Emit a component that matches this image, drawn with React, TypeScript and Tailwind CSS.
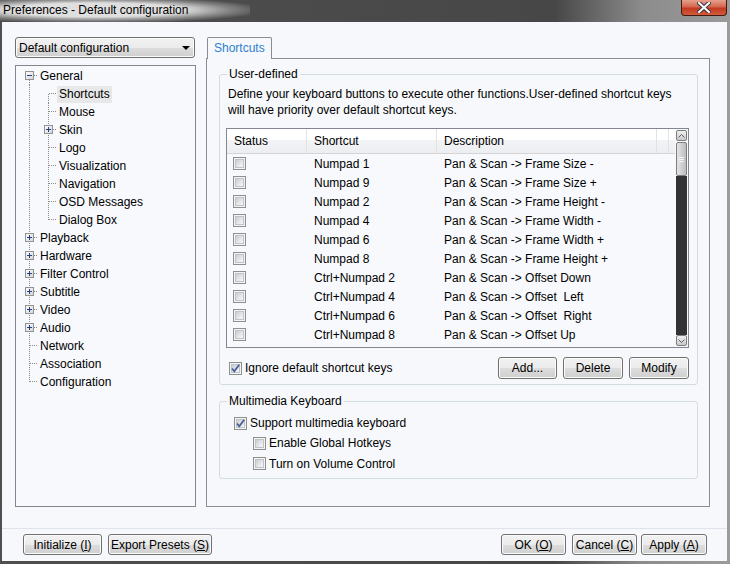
import type { ReactNode } from 'react';

const FONT = "font-['Liberation_Sans',Arial,sans-serif]";

type TreeItem = {
  label: string;
  level: 0 | 1;
  expander?: '+' | '-';
  first?: boolean;
  last?: boolean;
  selected?: boolean;
};

const tree: TreeItem[] = [
  { label: 'General', level: 0, expander: '-', first: true },
  { label: 'Shortcuts', level: 1, first: true, selected: true },
  { label: 'Mouse', level: 1 },
  { label: 'Skin', level: 1, expander: '+' },
  { label: 'Logo', level: 1 },
  { label: 'Visualization', level: 1 },
  { label: 'Navigation', level: 1 },
  { label: 'OSD Messages', level: 1 },
  { label: 'Dialog Box', level: 1, last: true },
  { label: 'Playback', level: 0, expander: '+' },
  { label: 'Hardware', level: 0, expander: '+' },
  { label: 'Filter Control', level: 0, expander: '+' },
  { label: 'Subtitle', level: 0, expander: '+' },
  { label: 'Video', level: 0, expander: '+' },
  { label: 'Audio', level: 0, expander: '+' },
  { label: 'Network', level: 0 },
  { label: 'Association', level: 0 },
  { label: 'Configuration', level: 0, last: true },
];

const shortcuts: [string, string][] = [
  ['Numpad 1', 'Pan & Scan -> Frame Size -'],
  ['Numpad 9', 'Pan & Scan -> Frame Size +'],
  ['Numpad 2', 'Pan & Scan -> Frame Height -'],
  ['Numpad 4', 'Pan & Scan -> Frame Width -'],
  ['Numpad 6', 'Pan & Scan -> Frame Width +'],
  ['Numpad 8', 'Pan & Scan -> Frame Height +'],
  ['Ctrl+Numpad 2', 'Pan & Scan -> Offset Down'],
  ['Ctrl+Numpad 4', 'Pan & Scan -> Offset  Left'],
  ['Ctrl+Numpad 6', 'Pan & Scan -> Offset  Right'],
  ['Ctrl+Numpad 8', 'Pan & Scan -> Offset Up'],
];

// one 16x18 connector cell of the tree (dotted lines + optional expander box)
function Connector({
  expander,
  first,
  last,
  through,
}: {
  expander?: '+' | '-';
  first?: boolean;
  last?: boolean;
  through?: boolean;
}) {
  const top = first ? (expander ? 13 : 9) : 0;
  const bottom = last ? 9 : 18;
  return (
    <svg width="16" height="18" viewBox="0 0 16 18" className="shrink-0" shapeRendering="crispEdges">
      {through ? (
        <line x1="7.5" y1="0" x2="7.5" y2="18" stroke="#8a8a8a" strokeDasharray="1 1" />
      ) : (
        <>
          <line x1="7.5" y1={top} x2="7.5" y2={bottom} stroke="#8a8a8a" strokeDasharray="1 1" />
          <line x1={expander ? 12 : 8} y1="8.5" x2="16" y2="8.5" stroke="#8a8a8a" strokeDasharray="1 1" />
          {expander && (
            <>
              <defs>
                <linearGradient id="exg" x1="0" y1="0" x2="1" y2="1">
                  <stop offset="0" stopColor="#ffffff" />
                  <stop offset="1" stopColor="#d4d4d4" />
                </linearGradient>
              </defs>
              <rect x="3.5" y="4.5" width="8" height="8" fill="url(#exg)" stroke="#929292" />
              <line x1="5" y1="8.5" x2="10" y2="8.5" stroke="#26408a" />
              {expander === '+' && <line x1="7.5" y1="6" x2="7.5" y2="11" stroke="#26408a" />}
            </>
          )}
        </>
      )}
    </svg>
  );
}

function TreeRow({ item }: { item: TreeItem }) {
  return (
    <div className="flex items-center h-[18px]">
      {item.level === 0 ? (
        <Connector expander={item.expander} first={item.first} last={item.last} />
      ) : (
        <>
          <Connector through />
          <span className="w-[3px] shrink-0" />
          <Connector expander={item.expander} first={item.first} last={item.last} />
        </>
      )}
      <span className={`px-[2px] leading-[17px] ${item.selected ? 'bg-[#e8e8e8]' : ''}`}>{item.label}</span>
    </div>
  );
}

function Checkbox({ checked }: { checked?: boolean }) {
  return (
    <span className="relative inline-flex w-[13px] h-[13px] shrink-0 items-center justify-center border border-[#8e8f8f] bg-[#f4f4f4]">
      <span className="w-[9px] h-[9px] border border-[#bfc3c8] bg-[linear-gradient(135deg,#c9ccd1_0%,#e6e8ea_60%,#f7f7f7_100%)]" />
      {checked && (
        <svg width="11" height="11" viewBox="0 0 11 11" className="absolute left-[0px] top-[0px]">
          <path d="M2 5.5 L4.3 8.3 L9.2 1.8" fill="none" stroke="#4a5f97" strokeWidth="1.8" />
        </svg>
      )}
    </span>
  );
}

function Button({ children, className = '' }: { children: ReactNode; className?: string }) {
  return (
    <div
      className={`h-[21px] flex items-center justify-center rounded-[3px] border border-[#707070] bg-[linear-gradient(to_bottom,#f2f2f2_0%,#ebebeb_50%,#dddddd_51%,#cfcfcf_100%)] shadow-[inset_0_0_0_1px_#fbfbfb] text-[12px] text-black ${className}`}
    >
      {children}
    </div>
  );
}

function ScrollArrow({ up }: { up?: boolean }) {
  return (
    <div className="h-[11px] mx-[1px] rounded-[2px] border border-[#7d7d7d] bg-[linear-gradient(to_bottom,#f0f0f0,#c9c9c9)] flex items-center justify-center">
      <svg width="7" height="4" viewBox="0 0 7 4">
        <path d={up ? 'M0.5 3.5 L3.5 0.5 L6.5 3.5' : 'M0.5 0.5 L3.5 3.5 L6.5 0.5'} fill="none" stroke="#606060" />
      </svg>
    </div>
  );
}

export default function App() {
  return (
    <div
      className={`w-[730px] h-[564px] flex flex-col overflow-hidden bg-[linear-gradient(to_right,#4f4f4f_0%,#474747_76%,#8c8c8c_88%,#9b9b9b_100%)] ${FONT} text-[12px] text-black`}
    >
      {/* Title bar */}
      <div className="h-[22px] flex items-start shrink-0">
        <div className="w-[250px] h-[22px] pl-[3px] pt-[2px] text-[12px] leading-[16px] text-black bg-[radial-gradient(ellipse_at_38%_45%,rgba(228,228,228,0.97)_40%,rgba(175,175,175,0.55)_62%,rgba(120,120,120,0)_78%)]">
          Preferences - Default configuration
        </div>
        <div className="ml-auto mr-[3px] w-[46px] h-[16px] rounded-b-[4px] border border-t-0 border-[#3f1b14] bg-[linear-gradient(to_bottom,#e6a08d_0%,#d4674f_45%,#c2391f_55%,#d55a3c_100%)] flex items-center justify-center">
          <svg width="14" height="11" viewBox="0 0 14 11">
            <path d="M2 1 L12 10 M12 1 L2 10" stroke="#3a3a4a" strokeWidth="4" strokeLinecap="square" />
            <path d="M2 1 L12 10 M12 1 L2 10" stroke="#ffffff" strokeWidth="2" strokeLinecap="square" />
          </svg>
        </div>
      </div>

      {/* Client area */}
      <div className="flex-1 ml-[2px] mr-[3px] mb-[3px] bg-[#f6f8fb] flex flex-col">
        <div className="flex pl-[13px] pt-[15px] h-[485px] shrink-0">
          {/* Left column */}
          <div className="w-[181px] flex flex-col">
            <div className="w-[180px] h-[21px] flex items-center pl-[3px] pr-[4px] rounded-[3px] border border-[#707070] bg-[linear-gradient(to_bottom,#f2f2f2_0%,#ebebeb_50%,#dddddd_51%,#cfcfcf_100%)] shadow-[inset_0_0_0_1px_#fbfbfb]">
              <span className="flex-1">Default configuration</span>
              <svg width="8" height="4" viewBox="0 0 8 4">
                <path d="M0 0 H8 L4 4 Z" fill="#000" />
              </svg>
            </div>
            <div className="mt-[7px] h-[442px] border border-[#828790] bg-[#f7f9fd] pl-[6px] pt-[1px]">
              {tree.map((item) => (
                <TreeRow key={item.label} item={item} />
              ))}
            </div>
          </div>

          {/* Right panel */}
          <div className="ml-[10px] w-[504px] flex flex-col">
            <div className="relative z-10 ml-[1px] -mb-[1px] w-[65px] h-[22px] border border-b-0 border-[#898c95] rounded-t-[2px] bg-[#f6f8fb] pl-[6px] pt-[1px] text-[#2f7fd0]">
              Shortcuts
            </div>
            <div className="h-[449px] border border-[#898c95] pl-[12px] pr-[11px] pt-[8px]">
              <fieldset className="border border-[#d3dbe3] rounded-[3px] pl-[6px] pr-[8px] pb-[5px]">
                <legend className="ml-[1px] px-[2px] leading-[14px]">User-defined</legend>
                <div className="mt-[5px] ml-[2px] leading-[16px]">
                  Define your keyboard buttons to execute other functions.User-defined shortcut keys
                  <br />
                  will have priority over default shortcut keys.
                </div>

                {/* Shortcut table */}
                <div className="mt-[10px] h-[220px] border border-[#828790] bg-[#f7f9fd] flex">
                  <div className="flex-1 flex flex-col overflow-hidden">
                    <div className="h-[25px] flex shrink-0 border-b border-[#d5d5d5] bg-[linear-gradient(to_bottom,#ffffff_0%,#ffffff_45%,#f2f3f5_46%,#eceef1_100%)]">
                      <div className="w-[80px] pl-[7px] flex items-center border-r border-[#e0e2e5]">Status</div>
                      <div className="w-[130px] pl-[7px] flex items-center border-r border-[#e0e2e5]">Shortcut</div>
                      <div className="w-[220px] pl-[7px] flex items-center border-r border-[#e0e2e5]">Description</div>
                      <div className="w-[12px] border-r border-[#e0e2e5]" />
                    </div>
                    {shortcuts.map(([key, desc]) => (
                      <div key={key} className="h-[19px] flex items-center shrink-0">
                        <div className="w-[80px] pl-[6px] flex items-center">
                          <Checkbox />
                        </div>
                        <div className="w-[130px] pl-[7px]">{key}</div>
                        <div className="pl-[7px] whitespace-pre">{desc}</div>
                      </div>
                    ))}
                  </div>
                  <div className="w-[13px] flex flex-col pt-[1px] pb-[1px] bg-[#f7f9fd]">
                    <ScrollArrow up />
                    <div className="mt-[1px] h-[34px] mx-[1px] rounded-[2px] border border-[#7d7d7d] bg-[linear-gradient(to_right,#e4e4e4,#bdbdbd)] flex flex-col items-center justify-center gap-[1px]">
                      <span className="w-[5px] h-px bg-[#f5f5f5]" />
                      <span className="w-[5px] h-px bg-[#f5f5f5]" />
                      <span className="w-[5px] h-px bg-[#f5f5f5]" />
                    </div>
                    <div className="flex-1 bg-[#333333] mx-[1px]" />
                    <ScrollArrow />
                  </div>
                </div>

                <div className="mt-[9px] h-[22px] flex items-center">
                  <span className="ml-[3px] flex items-center gap-[3px]">
                    <Checkbox checked />
                    Ignore default shortcut keys
                  </span>
                  <div className="ml-auto flex gap-[6px]">
                    <Button className="w-[59px] h-[22px]">Add...</Button>
                    <Button className="w-[60px] h-[22px]">Delete</Button>
                    <Button className="w-[60px] h-[22px]">Modify</Button>
                  </div>
                </div>
              </fieldset>

              <fieldset className="mt-[9px] border border-[#d3dbe3] rounded-[3px] pl-[14px] pb-[4px]">
                <legend className="-ml-[7px] px-[2px] leading-[14px]">Multimedia Keyboard</legend>
                <div className="mt-[5px] h-[20px] flex items-center gap-[3px]">
                  <Checkbox checked />
                  Support multimedia keyboard
                </div>
                <div className="h-[20px] ml-[19px] flex items-center gap-[3px]">
                  <Checkbox />
                  Enable Global Hotkeys
                </div>
                <div className="h-[21px] ml-[19px] flex items-center gap-[3px]">
                  <Checkbox />
                  Turn on Volume Control
                </div>
              </fieldset>
            </div>
          </div>
        </div>

        {/* Bottom buttons */}
        <div className="mt-[21px] border-t border-[#dfe4ec] pt-[5px] pl-[21px] pr-[20px] flex">
          <Button className="w-[79px]">
            <span>
              Initialize (<span className="underline">I</span>)
            </span>
          </Button>
          <Button className="ml-[6px] w-[104px]">
            <span>
              Export Presets (<span className="underline">S</span>)
            </span>
          </Button>
          <Button className="ml-auto w-[65px]">
            <span>
              OK (<span className="underline">O</span>)
            </span>
          </Button>
          <Button className="ml-[6px] w-[65px]">
            <span>
              Cancel (<span className="underline">C</span>)
            </span>
          </Button>
          <Button className="ml-[4px] w-[66px]">
            <span>
              Apply (<span className="underline">A</span>)
            </span>
          </Button>
        </div>
      </div>
    </div>
  );
}
